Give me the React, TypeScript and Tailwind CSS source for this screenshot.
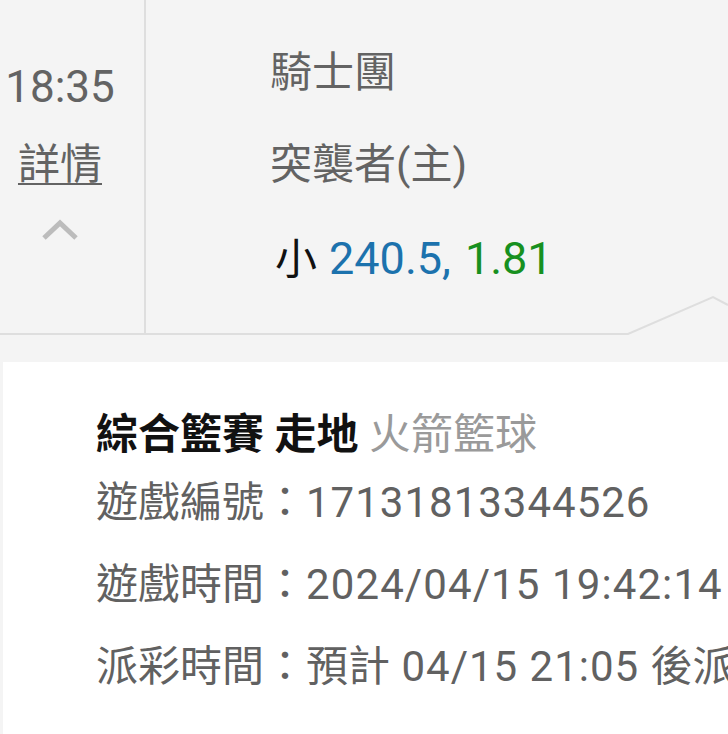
import React from "react";

export default function App() {
  return (
    <div
      className="relative w-[728px] h-[734px] overflow-hidden bg-[#f4f4f4]"
      style={{ fontFamily: "Roboto, 'Noto Sans CJK TC', sans-serif" }}
    >
      <div className="flex h-[335px] border-b-2 border-[#dedede]">
        <div className="w-[146px] border-r-2 border-[#dedede] flex flex-col items-center pr-[24px] pt-[67px] text-[#636363]">
          <div className="text-[44px] leading-[40px] h-[40px]">18:35</div>
          <div className="mt-[38px] text-[42px] leading-[40px] h-[40px] underline decoration-2 underline-offset-[4px]">詳情</div>
          <div className="mt-[32px] h-[26px] flex items-center">
            <svg width="38" height="24" viewBox="0 0 38 24">
              <polyline points="3,20 19,5 35,20" fill="none" stroke="#bcbcbc" strokeWidth="5" />
            </svg>
          </div>
        </div>
        <div className="flex-1 pl-[124px] pt-[53px] text-[42px] leading-[40px] text-[#636363] whitespace-nowrap">
          <div className="h-[40px]">騎士團</div>
          <div className="mt-[52px] h-[40px]">突襲者(主)</div>
          <div className="mt-[54px] h-[40px] ml-[5px]">
            <span className="text-[#111]">小</span>
            <span className="text-[45px] text-[#1c72ad] ml-[12px]">240.5,</span>
            <span className="text-[45px] text-[#17901f] ml-[14px]">1.81</span>
          </div>
        </div>
      </div>
      <svg className="absolute left-[600px] top-[290px]" width="128" height="50" viewBox="0 0 128 50">
        <polygon points="28,44 113,7 128,15 128,50 0,50 0,44" fill="#f4f4f4" />
        <polyline points="0,44 28,44 113,7 128,15" fill="none" stroke="#dedede" strokeWidth="2" />
      </svg>
      <div className="mt-[27px] ml-[3px] bg-white h-[400px] pl-[93px] pt-[52px] text-[42px] leading-[42px] text-[#616161] whitespace-nowrap">
        <div className="h-[42px]">
          <span className="font-bold text-[#111]">綜合籃賽 走地</span>{" "}
          <span className="text-[#9a9a9a]">火箭籃球</span>
        </div>
        <div className="mt-[26px] h-[42px]">
          遊戲編號：<span className="tracking-[1px]">17131813344526</span>
        </div>
        <div className="mt-[40px] h-[42px]">
          遊戲時間：<span className="tracking-[1.1px]">2024/04/15 19:42:14</span>
        </div>
        <div className="mt-[40px] h-[42px]">
          派彩時間：預計<span className="tracking-[1px]"> 04/15 21:05 </span>後派彩
        </div>
      </div>
    </div>
  );
}
